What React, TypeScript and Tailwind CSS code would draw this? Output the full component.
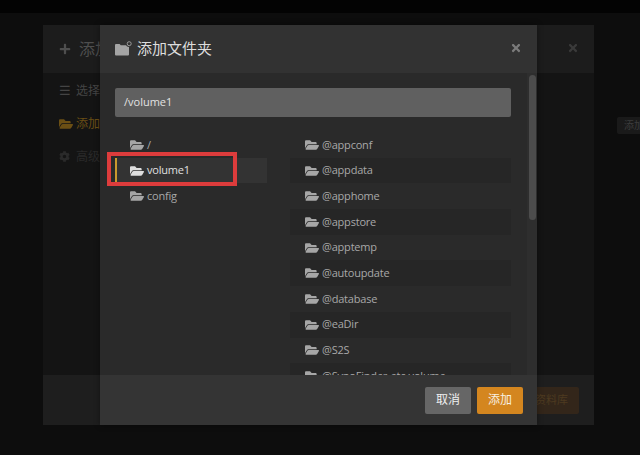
import { FaCog, FaFolderOpen, FaPlus, FaTimes } from "react-icons/fa";

const font = { fontFamily: '"Open Sans", "Noto Sans CJK SC", sans-serif' };

const rootFolders = ["/", "volume1", "config"];
const subFolders = [
  "@appconf",
  "@appdata",
  "@apphome",
  "@appstore",
  "@apptemp",
  "@autoupdate",
  "@database",
  "@eaDir",
  "@S2S",
  "@SynoFinder-etc-volume",
];

function FolderPlusIcon() {
  return (
    <svg width="17" height="15" viewBox="0 0 17 15" className="text-[#a4a4a4]">
      <path d="M0 4a1 1 0 0 1 1-1h3.6l1.2 1.3H13a1 1 0 0 1 1 1V13.6a1 1 0 0 1-1 1H1a1 1 0 0 1-1-1z" fill="currentColor" />
      <circle cx="14.2" cy="2.7" r="3.2" fill="#323232" />
      <circle cx="14.2" cy="2.7" r="2" fill="none" stroke="currentColor" strokeWidth="0.9" />
    </svg>
  );
}

function BackModal() {
  return (
    <div className="absolute left-[43px] top-[25px] flex h-[400px] w-[551px] flex-col bg-[#141414]">
      <div className="flex h-[48px] items-center justify-between bg-[#1c1c1c] pl-[16px] pr-[15px] text-[#4e4e4e]">
        <div className="flex items-center gap-[8px] text-[16px]">
          <FaPlus size={12} />
          <span>添加</span>
        </div>
        <FaTimes size={12} className="-translate-y-px text-[#3a3a3a]" />
      </div>
      <div className="flex flex-1 flex-col gap-[16px] pl-[16px] pt-[9px] text-[12px]">
        <div className="flex h-[17px] items-center gap-[5px] text-[#444]">
          <span className="text-[13px] leading-none">☰</span>
          <span>选择类</span>
        </div>
        <div className="flex h-[17px] items-center gap-[3px] text-[#6b4f14]">
          <FaFolderOpen size={14} />
          <span>添加文</span>
        </div>
        <div className="flex h-[17px] items-center gap-[6px] text-[#2a2a2a]">
          <FaCog size={11} />
          <span>高级</span>
        </div>
      </div>
      <div className="flex h-[50px] items-center justify-end bg-[#1e1e1e] pr-[15px]">
        <div className="flex h-[27px] items-center rounded-[2px] bg-[#33261a] px-[11px] text-[11px] text-[#4d3a20]">
          资料库
        </div>
      </div>
    </div>
  );
}

function FolderRow({ name, dark, active }: { name: string; dark?: boolean; active?: boolean }) {
  return (
    <div
      className={`flex h-[25.7px] items-center gap-[3px] text-[11px] tracking-[-0.2px] ${
        active ? "bg-[#333333] text-[#e0e0e0]" : dark ? "bg-[#262626] text-[#a8a8a8]" : "text-[#a8a8a8]"
      } ${active ? "border-l-2 border-[#c99a2e] pl-[13px]" : "pl-[15px]"}`}
    >
      <FaFolderOpen size={14} className={active ? "text-[#dedede]" : "text-[#a6a6a6]"} />
      <span className="whitespace-nowrap">{name}</span>
    </div>
  );
}

function FrontModal() {
  return (
    <div className="absolute left-[100px] top-[25px] flex h-[400px] w-[437px] flex-col bg-[#2a2a2a] shadow-[0_0_6px_rgba(0,0,0,0.4)]">
      <div className="flex h-[48px] shrink-0 items-center justify-between bg-[#323232] pl-[15px] pr-[15px]">
        <div className="flex -translate-y-px items-center gap-[5px] text-[15px] text-[#dddddd]">
          <FolderPlusIcon />
          <span>添加文件夹</span>
        </div>
        <FaTimes size={12} className="-translate-y-px text-[#7b7b7b]" />
      </div>
      <div className="flex min-h-0 flex-1">
        <div className="min-w-0 flex-1 overflow-hidden pl-[15px] pr-[16px] pt-[15px]">
          <div className="flex h-[29px] items-center rounded-[2px] bg-[#606060] px-[9px] text-[11px] text-[#e2e2e2]">
            /volume1
          </div>
          <div className="mt-[15px] flex gap-[23px]">
            <div className="w-[152px] shrink-0">
              {rootFolders.map((f) => (
                <FolderRow key={f} name={f} active={f === "volume1"} />
              ))}
            </div>
            <div className="min-w-0 flex-1">
              {subFolders.map((f, i) => (
                <FolderRow key={f} name={f} dark={i % 2 === 1} />
              ))}
            </div>
          </div>
        </div>
        <div className="w-[10px] shrink-0 bg-[#2e2e2e] pt-[2px]">
          <div className="mx-auto h-[145px] w-[7px] rounded-full bg-[#4c4c4c]" />
        </div>
      </div>
      <div className="flex h-[50px] shrink-0 items-center justify-end gap-[6px] bg-[#343434] pr-[14px]">
        <button className="flex h-[27px] w-[46px] items-center justify-center rounded-[2px] bg-[#666666] text-[12px] text-[#f0f0f0]">
          取消
        </button>
        <button className="flex h-[27px] w-[46px] items-center justify-center rounded-[2px] bg-[#d4861f] text-[12px] text-[#f8f0e0]">
          添加
        </button>
      </div>
    </div>
  );
}

export default function App() {
  return (
    <div className="relative flex h-[455px] w-[640px] flex-col overflow-hidden bg-[#0d0d0d]" style={font}>
      <div className="h-[13px] shrink-0 bg-[#030303]" />
      <BackModal />
      <div className="absolute left-[617px] top-[117px] flex h-[17px] w-[30px] items-center rounded-[2px] bg-[#1a1a1a] pl-[7px] text-[10px] text-[#3c3c3c]">
        添加
      </div>
      <FrontModal />
      {/* red highlight drawn over the screenshot */}
      <div className="absolute left-[107px] top-[152px] h-[34px] w-[130px] border-[4px] border-[#dd3c3c]" />
    </div>
  );
}
